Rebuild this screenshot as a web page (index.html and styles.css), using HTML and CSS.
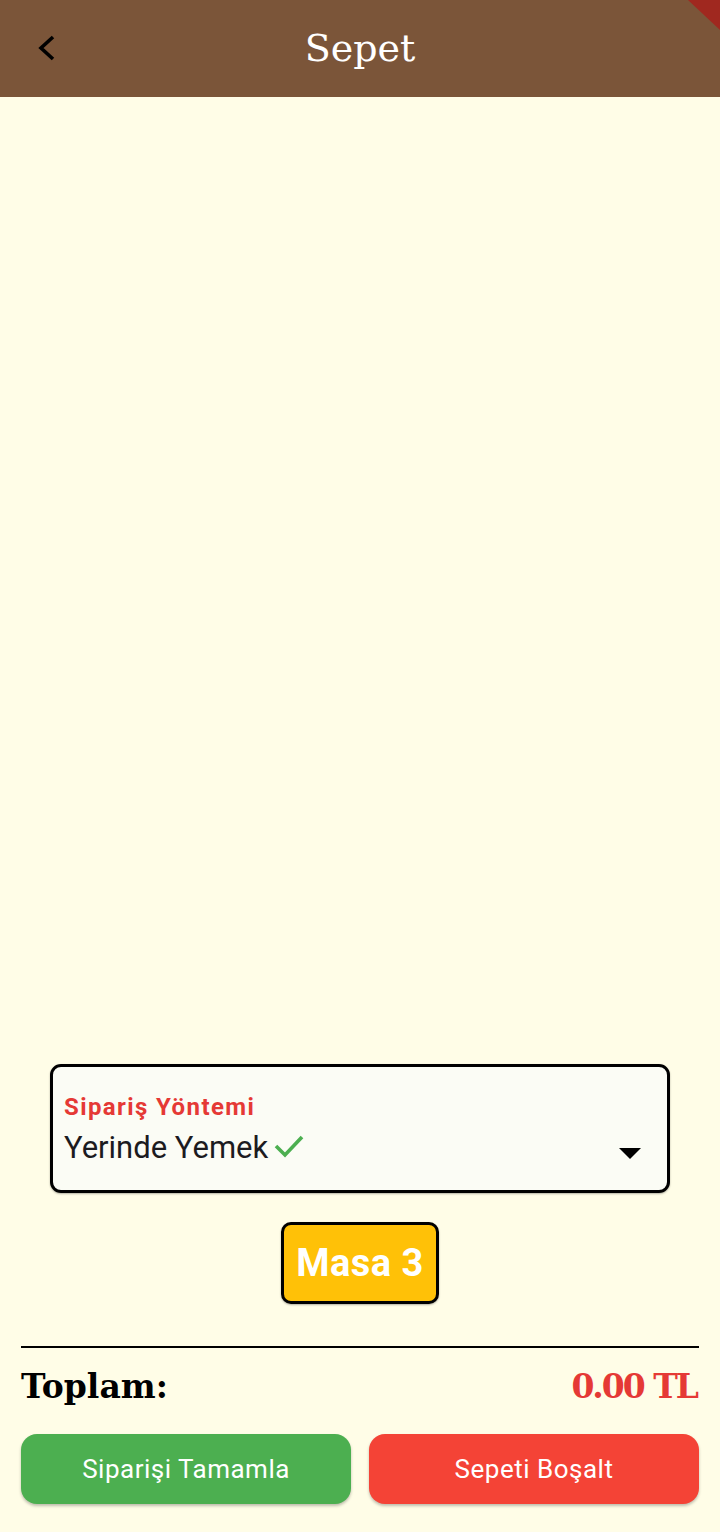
FILE: index.html
```html
<!DOCTYPE html>
<html lang="tr">
<head>
<meta charset="utf-8">
<title>Sepet</title>
<link rel="stylesheet" href="styles.css">
</head>
<body>
<div class="screen">
  <header class="appbar">
    <button class="back" aria-label="Geri">
      <svg width="24" height="30" viewBox="0 0 24 30"><polyline points="17,4 5,15 17,26" fill="none" stroke="#000" stroke-width="3.6"/></svg>
    </button>
    <h1 class="title">Sepet</h1>
    <div class="debug-banner"></div>
  </header>
  <main class="content"></main>
  <section class="bottom">
    <div class="dropdown">
      <div class="dd-text">
        <div class="dd-label">Sipariş Yöntemi</div>
        <div class="dd-value">Yerinde Yemek<svg class="check" width="32" height="26" viewBox="0 0 32 26"><polyline points="3,13 12,22 29,4" fill="none" stroke="#4CAF50" stroke-width="3.6"/></svg></div>
      </div>
      <div class="dd-arrow"></div>
    </div>
    <div class="masa-wrap"><div class="masa">Masa 3</div></div>
    <hr class="divider">
    <div class="total">
      <span class="total-label">Toplam:</span>
      <span class="total-value">0.00 TL</span>
    </div>
    <div class="actions">
      <button class="btn btn-green">Siparişi Tamamla</button>
      <button class="btn btn-red">Sepeti Boşalt</button>
    </div>
  </section>
</div>
</body>
</html>
```
FILE: styles.css
```css
* { box-sizing: border-box; }
html, body { margin: 0; padding: 0; }
body {
  background: #FFFDE7;
  font-family: Roboto, "Noto Sans", sans-serif;
}
.screen {
  width: 720px;
  height: 1532px;
  display: flex;
  flex-direction: column;
  overflow: hidden;
}
.appbar {
  height: 97px;
  background: #7B5539;
  display: flex;
  align-items: center;
  justify-content: center;
  position: relative;
  flex: none;
}
.back {
  position: absolute;
  left: 36px;
  top: 33px;
  background: none;
  border: 0;
  padding: 0;
  width: 24px;
  height: 30px;
}
.back svg { display: block; }
.title {
  margin: 0;
  font-family: "DejaVu Serif", serif;
  font-weight: normal;
  font-size: 38px;
  color: #FFFFFF;
  line-height: 1;
  margin-top: -2px;
}
.debug-banner {
  position: absolute;
  top: 0;
  right: 0;
  width: 32px;
  height: 30px;
  background: #A0281F;
  clip-path: polygon(0 0, 100% 0, 100% 100%);
}
.content { flex: 1; }
.bottom {
  padding: 0 21px 28px;
  display: flex;
  flex-direction: column;
}
.dropdown {
  margin: 0 29px;
  height: 129px;
  border: 3px solid #000;
  border-radius: 11px;
  background: #FBFCF5;
  box-shadow: 0 1px 2px rgba(0,0,0,0.3);
  display: flex;
  align-items: center;
  padding: 0 26px 0 11px;
}
.dd-text { flex: 1; padding-top: 4px; }
.dd-label {
  font-weight: 700;
  font-size: 24px;
  letter-spacing: 1.4px;
  color: #E53935;
  line-height: 28px;
}
.dd-value {
  font-size: 31px;
  color: #1C1B1F;
  line-height: 40px;
  margin-top: 7px;
  display: flex;
  align-items: center;
}
.check { margin-left: 5px; margin-top: -4px; }
.dd-arrow {
  width: 0;
  height: 0;
  border-left: 11px solid transparent;
  border-right: 11px solid transparent;
  border-top: 11px solid #000;
  margin-top: 50px;
}
.masa-wrap {
  display: flex;
  justify-content: center;
  margin-top: 29px;
}
.masa {
  width: 158px;
  height: 82px;
  background: #FFC107;
  border: 3px solid #000;
  border-radius: 10px;
  color: #FFFFFF;
  font-weight: 700;
  font-size: 38px;
  letter-spacing: 0.5px;
  display: flex;
  align-items: center;
  justify-content: center;
  box-shadow: 0 1px 2px rgba(0,0,0,0.3);
}
.divider {
  margin: 42px 0 0;
  border: 0;
  height: 2px;
  background: #000;
}
.total {
  display: flex;
  justify-content: space-between;
  align-items: center;
  margin-top: 18px;
  height: 40px;
  font-family: "DejaVu Serif", serif;
  font-weight: 700;
  font-size: 33px;
}
.total-label { color: #000; }
.total-value { color: #E53935; letter-spacing: -2px; margin-right: 2px; }
.actions {
  display: flex;
  gap: 18px;
  margin-top: 28px;
}
.btn {
  flex: 1;
  height: 70px;
  border: 0;
  border-radius: 16px;
  color: #FFFFFF;
  font-family: Roboto, sans-serif;
  font-size: 26px;
  letter-spacing: 0.5px;
  box-shadow: 0 2px 3px rgba(0,0,0,0.25);
}
.btn-green { background: #4CAF50; }
.btn-red { background: #F44336; }
```
